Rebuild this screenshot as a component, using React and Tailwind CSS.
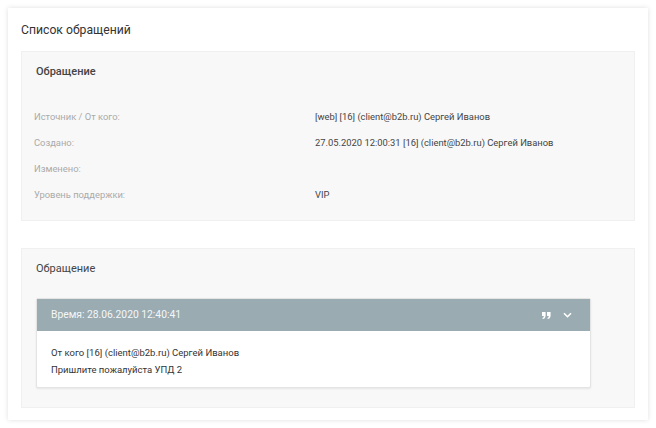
import React from "react";

const rows = [
  { label: "Источник / От кого:", value: "[web] [16] (client@b2b.ru) Сергей Иванов" },
  { label: "Создано:", value: "27.05.2020 12:00:31 [16] (client@b2b.ru) Сергей Иванов" },
  { label: "Изменено:", value: "" },
  { label: "Уровень поддержки:", value: "VIP" },
];

function QuoteIcon() {
  return (
    <svg width="9" height="7" viewBox="0 0 9 7" fill="currentColor">
      <path d="M0 0h3.6v3.4C3.6 5.4 2.6 6.6 0.7 7L0.4 6.1C1.3 5.8 1.8 5.1 1.8 4.1H0z" />
      <path d="M5 0h3.6v3.4C8.6 5.4 7.6 6.6 5.7 7L5.4 6.1C6.3 5.8 6.8 5.1 6.8 4.1H5z" />
    </svg>
  );
}

function ChevronIcon() {
  return (
    <svg width="9" height="6" viewBox="0 0 9 6" fill="none" stroke="currentColor" strokeWidth="1.6">
      <path d="M1 1.2l3.5 3.5 3.5-3.5" />
    </svg>
  );
}

export default function App() {
  return (
    <div className="min-h-screen bg-white p-2 font-['Roboto',sans-serif]">
      <div className="bg-white shadow-[0_0_5px_rgba(0,0,0,0.13)] px-[13px] pt-[14px] pb-[12px]">
        <h1 className="text-[12.2px] leading-4 text-[#333]">Список обращений</h1>

        {/* Details panel */}
        <div className="mt-[13px] bg-[#f8f8f8] border border-[#f0f0f0] px-[12px] pt-[12px] pb-[12px]">
          <h2 className="pl-[2px] text-[11px] leading-4 font-medium text-[#444]">Обращение</h2>
          <div className="mt-[24px]">
            {rows.map((row) => (
              <div key={row.label} className="flex h-[26px] items-center text-[9.4px]">
                <div className="w-[281px] text-[#aaa]">{row.label}</div>
                <div className="text-[#444]">{row.value}</div>
              </div>
            ))}
          </div>
        </div>

        {/* Messages panel */}
        <div className="mt-[27px] bg-[#f8f8f8] border border-[#f0f0f0] px-[14px] pt-[12px] pb-[19px]">
          <h2 className="text-[11px] leading-4 text-[#444]">Обращение</h2>
          <div className="mt-[21px] w-[555px] bg-white border border-[#e4e4e4] rounded-[2px] shadow-[0_1px_2px_rgba(0,0,0,0.08)]">
            <div className="flex h-[32px] items-center justify-between bg-[#9aabb2] px-[14px] text-[10.3px] text-[#f4f7f8]">
              <span>Время: 28.06.2020 12:40:41</span>
              <div className="flex items-center gap-[12px] pr-[4px] text-white">
                <QuoteIcon />
                <ChevronIcon />
              </div>
            </div>
            <div className="px-[14px] pt-[13px] pb-[9px] text-[9.5px] leading-[17px] text-[#333]">
              <div>От кого [16] (client@b2b.ru) Сергей Иванов</div>
              <div>Пришлите пожалуйста УПД 2</div>
            </div>
          </div>
        </div>
      </div>
    </div>
  );
}
